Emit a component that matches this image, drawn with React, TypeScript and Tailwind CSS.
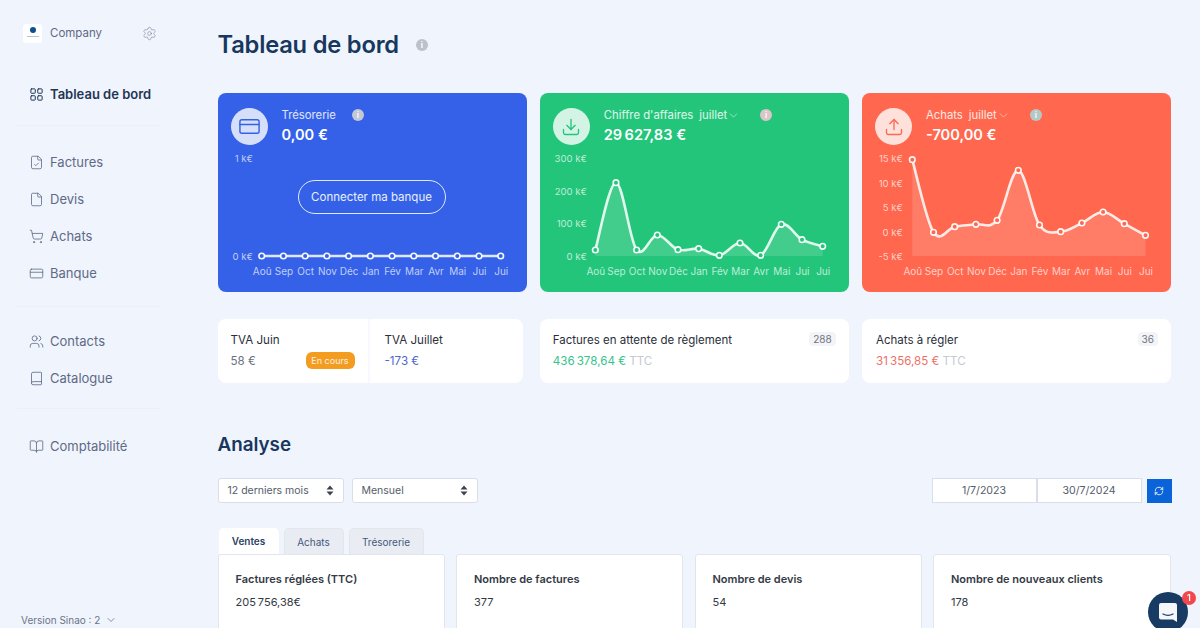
import React from 'react';
import {
  LayoutGrid, FileCheck, File, ShoppingCart, CreditCard, Users, Book, BookOpen,
  Settings, Download, Upload, ChevronDown, RefreshCw,
} from 'lucide-react';

const months = ['Aoû', 'Sep', 'Oct', 'Nov', 'Déc', 'Jan', 'Fév', 'Mar', 'Avr', 'Mai', 'Jui', 'Jui'];

// spline through the points, same look as a chart.js line with tension
const linePath = (pts: number[][]) => {
  let d = `M${pts[0][0]} ${pts[0][1]}`;
  for (let i = 0; i < pts.length - 1; i++) {
    const p0 = pts[Math.max(i - 1, 0)];
    const p1 = pts[i];
    const p2 = pts[i + 1];
    const p3 = pts[Math.min(i + 2, pts.length - 1)];
    const t = 0.17;
    d += ` C${p1[0] + (p2[0] - p0[0]) * t} ${p1[1] + (p2[1] - p0[1]) * t} ${p2[0] - (p3[0] - p1[0]) * t} ${p2[1] - (p3[1] - p1[1]) * t} ${p2[0]} ${p2[1]}`;
  }
  return d;
};

interface ChartProps {
  startX: number;
  stepX: number;
  values: number[];
  axis: { label: string; y: number }[];
  axisX: number;
  dot: string;
}

const Chart: React.FC<ChartProps> = ({ startX, stepX, values, axis, axisX, dot }) => {
  const pts = values.map((y, i) => [startX + stepX * i, y]);
  const line = linePath(pts);
  const last = pts[pts.length - 1];
  return <svg viewBox="0 57 309 142" className="block w-full h-[142px]">
      <path d={`${line} L${last[0]} 163 L${pts[0][0]} 163 Z`} fill="#ffffff" fillOpacity="0.14" />
      <path d={line} fill="none" stroke="#ffffff" strokeOpacity="0.85" strokeWidth="2.6" />
      {pts.map((p, i) => <circle key={i} cx={p[0]} cy={p[1]} r="2.8" fill={dot} stroke="#ffffff" strokeOpacity="0.95" strokeWidth="1.6" />)}
      {axis.map(a => <text key={a.label} x={axisX} y={a.y + 3.5} textAnchor="end" fontSize="9.6" fill="#ffffff" fillOpacity="0.7">{a.label}</text>)}
      {pts.map((p, i) => <text key={i} x={p[0] + 0.5} y="181.5" textAnchor="middle" fontSize="10" fill="#ffffff" fillOpacity="0.7">{months[i]}</text>)}
    </svg>;
};

const InfoDot: React.FC<{ className: string }> = ({ className }) => <span className={`w-3 h-3 rounded-full flex items-center justify-center text-[8px] font-bold text-white/90 leading-none ${className}`}>i</span>;

interface StatCardProps {
  color: string;
  iconColor: string;
  infoColor: string;
  icon: React.ReactNode;
  title: string;
  period?: boolean;
  value: string;
  children: React.ReactNode;
}

const StatCard: React.FC<StatCardProps> = ({ color, iconColor, infoColor, icon, title, period, value, children }) => {
  return <div className={`relative h-[199px] rounded-lg overflow-hidden ${color}`}>
      <div className="flex h-[57px] pl-[13px] pt-[15px]">
        <div className={`w-[37px] h-[37px] rounded-full bg-white/80 flex items-center justify-center ${iconColor}`}>{icon}</div>
        <div className="ml-[14px] -mt-[1px]">
          <div className="flex items-center h-[16px] text-[11.3px] text-white/85">
            <span>{title}</span>
            {period && <span className="ml-[6px]">juillet</span>}
            {period && <ChevronDown size={13} strokeWidth={1.1} className="ml-[0px]" />}
            <InfoDot className={`${infoColor} ${period ? 'ml-5' : 'ml-4'}`} />
          </div>
          <div className="mt-[2px] text-[14.6px] leading-[20px] font-semibold text-white">{value}</div>
        </div>
      </div>
      {children}
    </div>;
};

const NavItem: React.FC<{ icon: React.ReactNode; label: string; active?: boolean }> = ({ icon, label, active }) => <div className={`flex items-center h-[37px] pl-[29px] pt-[2px] text-[13px] ${active ? 'font-semibold text-[#1f3654]' : 'text-[#5f6a85]'}`}>
    <span className="w-[21px] flex items-center">{icon}</span>
    {label}
  </div>;

const Divider = () => <div className="mx-[17px] w-[143px] border-t border-[#ebeff8]" />;

const SelectBox: React.FC<{ label: string; width: string }> = ({ label, width }) => <div className={`flex items-center justify-between h-[25px] px-[9px] bg-white border border-[#d9deea] rounded-[3px] text-[10.5px] text-[#555c6b] ${width}`}>
    {label}
    <svg width="8" height="11" viewBox="0 0 8 11" fill="#3c4350"><path d="M4 0.5 7.5 4.5H0.5Z" /><path d="M4 10.5 0.5 6.5H7.5Z" /></svg>
  </div>;

const KpiCard: React.FC<{ title: string; value: string }> = ({ title, value }) => <div className="h-[90px] bg-white border border-[#e1e5ee] rounded-t-[3px] pl-[17px] pt-[17px]">
    <div className="text-[11px] font-semibold leading-[14px] text-[#333a45]">{title}</div>
    <div className="mt-[9px] text-[11px] leading-[14px] text-[#333a45]">{value}</div>
  </div>;

const CountBadge: React.FC<{ n: string }> = ({ n }) => <span className="absolute right-[13px] top-[13px] px-[4px] h-[14px] rounded-[4px] bg-[#f3f4f7] text-[10px] leading-[14px] text-[#70757f]">{n}</span>;

export default function App() {
  return <div className="flex h-[628px] w-[1200px] overflow-hidden bg-[#f0f4fd] font-['Inter','Noto_Sans',sans-serif]">
      <aside className="w-[217.5px] shrink-0 flex flex-col">
        <div className="flex items-center h-[20px] mt-[23px] ml-[23px] w-[134px]">
          <div className="w-[19px] h-[19px] rounded-[3px] bg-white flex flex-col items-center pt-[3px]">
            <span className="w-[6px] h-[6px] rounded-full bg-[#0f4f8f]" />
            <span className="mt-[3px] w-[12px] h-[1px] bg-[#b9c2cf]" />
          </div>
          <span className="ml-[8px] pt-[1px] text-[11.5px] text-[#5f6a85]">Company</span>
          <Settings size={15} strokeWidth={1} className="ml-auto mt-[1px] text-[#7d869c]" />
        </div>
        <div className="mt-[32px]">
          <NavItem active label="Tableau de bord" icon={<LayoutGrid size={15} strokeWidth={1.6} />} />
        </div>
        <div className="mt-[13px]"><Divider /></div>
        <div className="mt-[17px]">
          <NavItem label="Factures" icon={<FileCheck size={15} strokeWidth={1.3} />} />
          <NavItem label="Devis" icon={<File size={15} strokeWidth={1.3} />} />
          <NavItem label="Achats" icon={<ShoppingCart size={15} strokeWidth={1.3} />} />
          <NavItem label="Banque" icon={<CreditCard size={15} strokeWidth={1.3} />} />
        </div>
        <div className="mt-[15px]"><Divider /></div>
        <div className="mt-[15px]">
          <NavItem label="Contacts" icon={<Users size={15} strokeWidth={1.3} />} />
          <NavItem label="Catalogue" icon={<Book size={15} strokeWidth={1.3} />} />
        </div>
        <div className="mt-[12px]"><Divider /></div>
        <div className="mt-[18px]">
          <NavItem label="Comptabilité" icon={<BookOpen size={15} strokeWidth={1.3} />} />
        </div>
        <div className="mt-auto mb-[2px] ml-[21px] flex items-center text-[10px] leading-[12px] text-[#6b7488]">
          Version Sinao : 2
          <ChevronDown size={12} strokeWidth={1.6} className="ml-[5px]" />
        </div>
      </aside>

      <main className="w-[954px] shrink-0">
        <div className="flex items-center h-[30px] mt-[30px]">
          <h1 className="text-[23.7px] font-semibold text-[#17375e] tracking-[-0.2px]">Tableau de bord</h1>
          <span className="ml-[17px] w-[12px] h-[12px] rounded-full bg-[#bcc1cb] flex items-center justify-center text-[8px] font-bold text-white leading-none">i</span>
        </div>

        <div className="grid grid-cols-[309px_309px_309px] gap-[13.25px] mt-[33px]">
          <StatCard color="bg-[#3461e8]" iconColor="text-[#3461e8]" infoColor="bg-[#c3c8d6]" title="Trésorerie" value="0,00 €" icon={<CreditCard size={23} strokeWidth={1.5} />}>
            <Chart startX={43.7} stepX={21.73} values={Array(12).fill(163)} dot="#3461e8" axisX={35} axis={[{ label: '1 k€', y: 65 }, { label: '0 k€', y: 163 }]} />
            <div className="absolute left-[80px] top-[87px] w-[148px] h-[34px] pt-[1px] rounded-full border border-white/85 flex items-center justify-center text-[11.5px] text-white/90">Connecter ma banque</div>
          </StatCard>
          <StatCard color="bg-[#23c57b]" iconColor="text-[#23c57b]" infoColor="bg-[#dcc5c8]" title="Chiffre d'affaires" period value={'29\u202f627,83 €'} icon={<Download size={20} strokeWidth={1.6} />}>
            <Chart startX={55.3} stepX={20.67} values={[157, 89.7, 157, 142, 156.7, 155.7, 162.3, 150, 162.3, 131.3, 146.7, 153.3]} dot="#23c57b" axisX={47} axis={[{ label: '300 k€', y: 65 }, { label: '200 k€', y: 98 }, { label: '100 k€', y: 130 }, { label: '0 k€', y: 163 }]} />
          </StatCard>
          <StatCard color="bg-[#ff674e]" iconColor="text-[#ff674e]" infoColor="bg-[#b5c8c8]" title="Achats" period value="-700,00 €" icon={<Upload size={20} strokeWidth={1.6} />}>
            <Chart startX={50.3} stepX={21.2} values={[66.7, 139.3, 133.7, 131.3, 127.3, 77.3, 132, 138.7, 130, 119, 130.7, 142.3]} dot="#ff674e" axisX={41} axis={[{ label: '15 k€', y: 65 }, { label: '10 k€', y: 90 }, { label: '5 k€', y: 114 }, { label: '0 k€', y: 139 }, { label: '-5 k€', y: 163 }]} />
          </StatCard>
        </div>

        <div className="grid grid-cols-[309px_309px_309px] gap-[13.25px] mt-[27px] h-[64px]">
          <div className="flex w-[305px] bg-white rounded-lg">
            <div className="relative w-[152px] border-r-2 border-[#f7f9fe] pl-[13px] pt-[13px]">
              <div className="text-[11.6px] leading-[16px] text-[#2a2f3a]">TVA Juin</div>
              <div className="mt-[5px] text-[11.6px] leading-[16px] text-[#6b7280]">58 €</div>
              <span className="absolute right-[13px] top-[33px] w-[49px] h-[17px] rounded-[6px] bg-[#f39c1f] text-[9px] leading-[17px] text-center text-white/85">En cours</span>
            </div>
            <div className="flex-1 pl-[15px] pt-[13px]">
              <div className="text-[11.6px] leading-[16px] text-[#2a2f3a]">TVA Juillet</div>
              <div className="mt-[5px] text-[11.6px] leading-[16px] text-[#4e68c8]">-173 €</div>
            </div>
          </div>
          <div className="relative bg-white rounded-lg pl-[13px] pt-[13px]">
            <div className="text-[11.5px] leading-[16px] text-[#2a2f3a]">Factures en attente de règlement</div>
            <div className="mt-[5px] text-[11.6px] leading-[16px] text-[#35c48a]">{'436\u202f378,64 €'} <span className="text-[#c6c9cf]">TTC</span></div>
            <CountBadge n="288" />
          </div>
          <div className="relative bg-white rounded-lg pl-[14px] pt-[13px]">
            <div className="text-[11.5px] leading-[16px] text-[#2a2f3a]">Achats à régler</div>
            <div className="mt-[5px] text-[11.6px] leading-[16px] text-[#ee7166]">{'31\u202f356,85 €'} <span className="text-[#c6c9cf]">TTC</span></div>
            <CountBadge n="36" />
          </div>
        </div>

        <h2 className="mt-[47px] h-[28px] pt-[1px] text-[18.8px] leading-[28px] font-semibold text-[#17375e]">Analyse</h2>

        <div className="flex items-center mt-[20px] w-[954px]">
          <SelectBox label="12 derniers mois" width="w-[126px]" />
          <div className="ml-[8px]"><SelectBox label="Mensuel" width="w-[126px]" /></div>
          <div className="ml-auto flex items-center">
            <div className="w-[105px] h-[25px] bg-white border border-[#d9deea] text-center text-[10.6px] leading-[23px] text-[#555c6b]">1/7/2023</div>
            <div className="w-[105px] h-[25px] bg-white border border-[#d9deea] text-center text-[10.6px] leading-[23px] text-[#555c6b]">30/7/2024</div>
            <div className="ml-[5px] w-[25px] h-[24px] bg-[#0a63d8] flex items-center justify-center text-white"><RefreshCw size={10} strokeWidth={2} /></div>
          </div>
        </div>

        <div className="flex items-end mt-[25px] ml-[1px] h-[26px] text-[10px]">
          <div className="w-[60px] h-[26px] bg-white rounded-t-[5px] text-center leading-[26px] font-semibold text-[#2b4263]">Ventes</div>
          <div className="ml-[5px] w-[60px] h-[26px] bg-[#e9edf3] border border-[#e1e5ee] border-b-0 rounded-t-[5px] text-center leading-[26px] text-[#45597a]">Achats</div>
          <div className="ml-[5px] w-[75px] h-[26px] bg-[#e9edf3] border border-[#e1e5ee] border-b-0 rounded-t-[5px] text-center leading-[26px] text-[#45597a]">Trésorerie</div>
        </div>
        <div className="grid grid-cols-[227px_227px_227px_1fr] gap-[11.5px] w-[953.5px]">
          <KpiCard title="Factures réglées (TTC)" value={'205\u202f756,38€'} />
          <KpiCard title="Nombre de factures" value="377" />
          <KpiCard title="Nombre de devis" value="54" />
          <KpiCard title="Nombre de nouveaux clients" value="178" />
        </div>
      </main>

      <div className="fixed left-[1148px] top-[592px] w-[40px] h-[40px] rounded-full bg-[#173b63] flex items-center justify-center">
        <svg width="20" height="20" viewBox="0 0 20 20" className="mt-[1px]">
          <path d="M3 0h14a2 2 0 0 1 2 2v17l-4-2.5H3a2 2 0 0 1-2-2V2a2 2 0 0 1 2-2Z" fill="#f4f6fa" />
          <path d="M5 11c3 1.6 7 1.6 10 0" fill="none" stroke="#173b63" strokeWidth="1.2" strokeLinecap="round" />
        </svg>
        <span className="absolute left-[34px] top-[-1px] w-[14px] h-[14px] rounded-full bg-[#f2474c] text-white text-[9px] leading-[14px] text-center font-semibold">1</span>
      </div>
    </div>;
}
